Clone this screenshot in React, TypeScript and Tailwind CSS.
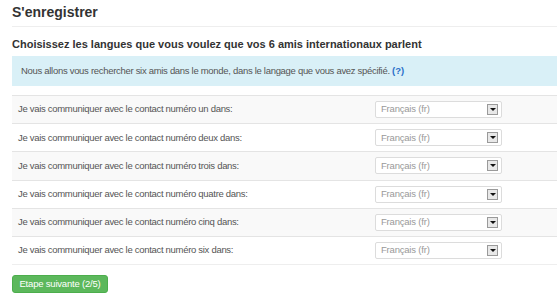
import React from "react";

const numbers = ["un", "deux", "trois", "quatre", "cinq", "six"];

const LangSelect: React.FC = () => (
  <div className="flex h-[17px] w-[127px] items-center justify-between rounded-[2px] border border-[#dcdcdc] bg-white pl-[5px] pr-[3px]">
    <span className="text-[9.5px] tracking-[-0.2px] text-[#999]">Français (fr)</span>
    <span className="flex h-[11px] w-[11px] items-center justify-center border border-[#9a9a9a] bg-[#e8e8e8]">
      <span className="h-0 w-0 border-x-[3px] border-t-[3px] border-x-transparent border-t-[#111]"></span>
    </span>
  </div>
);

export default function App() {
  return (
    <div className="h-[305px] w-[557px] overflow-hidden bg-white pl-[12px] font-['Liberation_Sans',Arial,sans-serif] text-[#333]">
      <h1 className="pt-[4px] text-[14px] font-bold leading-[17px]">S'enregistrer</h1>
      <div className="mt-[5px] border-t border-[#eee]"></div>
      <h2 className="mt-[10px] text-[11px] font-bold leading-[15px]">
        Choisissez les langues que vous voulez que vos 6 amis internationaux parlent
      </h2>
      <div className="mt-[4px] flex h-[30px] items-center bg-[#d9f0f7] pl-[9px] text-[9.5px] tracking-[-0.3px] text-[#555]">
        Nous allons vous rechercher six amis dans le monde, dans le langage que vous avez spécifié.&nbsp;
        <span className="font-bold tracking-normal text-[#2a6fc9]">(?)</span>
      </div>
      <div className="mt-[9px] border-b border-[#eee]">
        {numbers.map((n, i) => (
          <div
            key={n}
            className={`grid h-[28.2px] grid-cols-[363px_1fr] items-center border-t border-[#e4e4e4] ${i % 2 === 0 ? "bg-[#f9f9f9]" : "bg-white"}`}
          >
            <span className="pl-[6px] text-[9.5px] tracking-[-0.3px] text-[#555]">
              Je vais communiquer avec le contact numéro {n} dans:
            </span>
            <LangSelect />
          </div>
        ))}
      </div>
      <button className="mt-[10px] h-[18px] w-[96px] rounded-[3px] border border-[#4cae4c] bg-[#5cb85c] text-[9.5px] tracking-[-0.2px] text-white">
        Etape suivante (2/5)
      </button>
    </div>
  );
}
